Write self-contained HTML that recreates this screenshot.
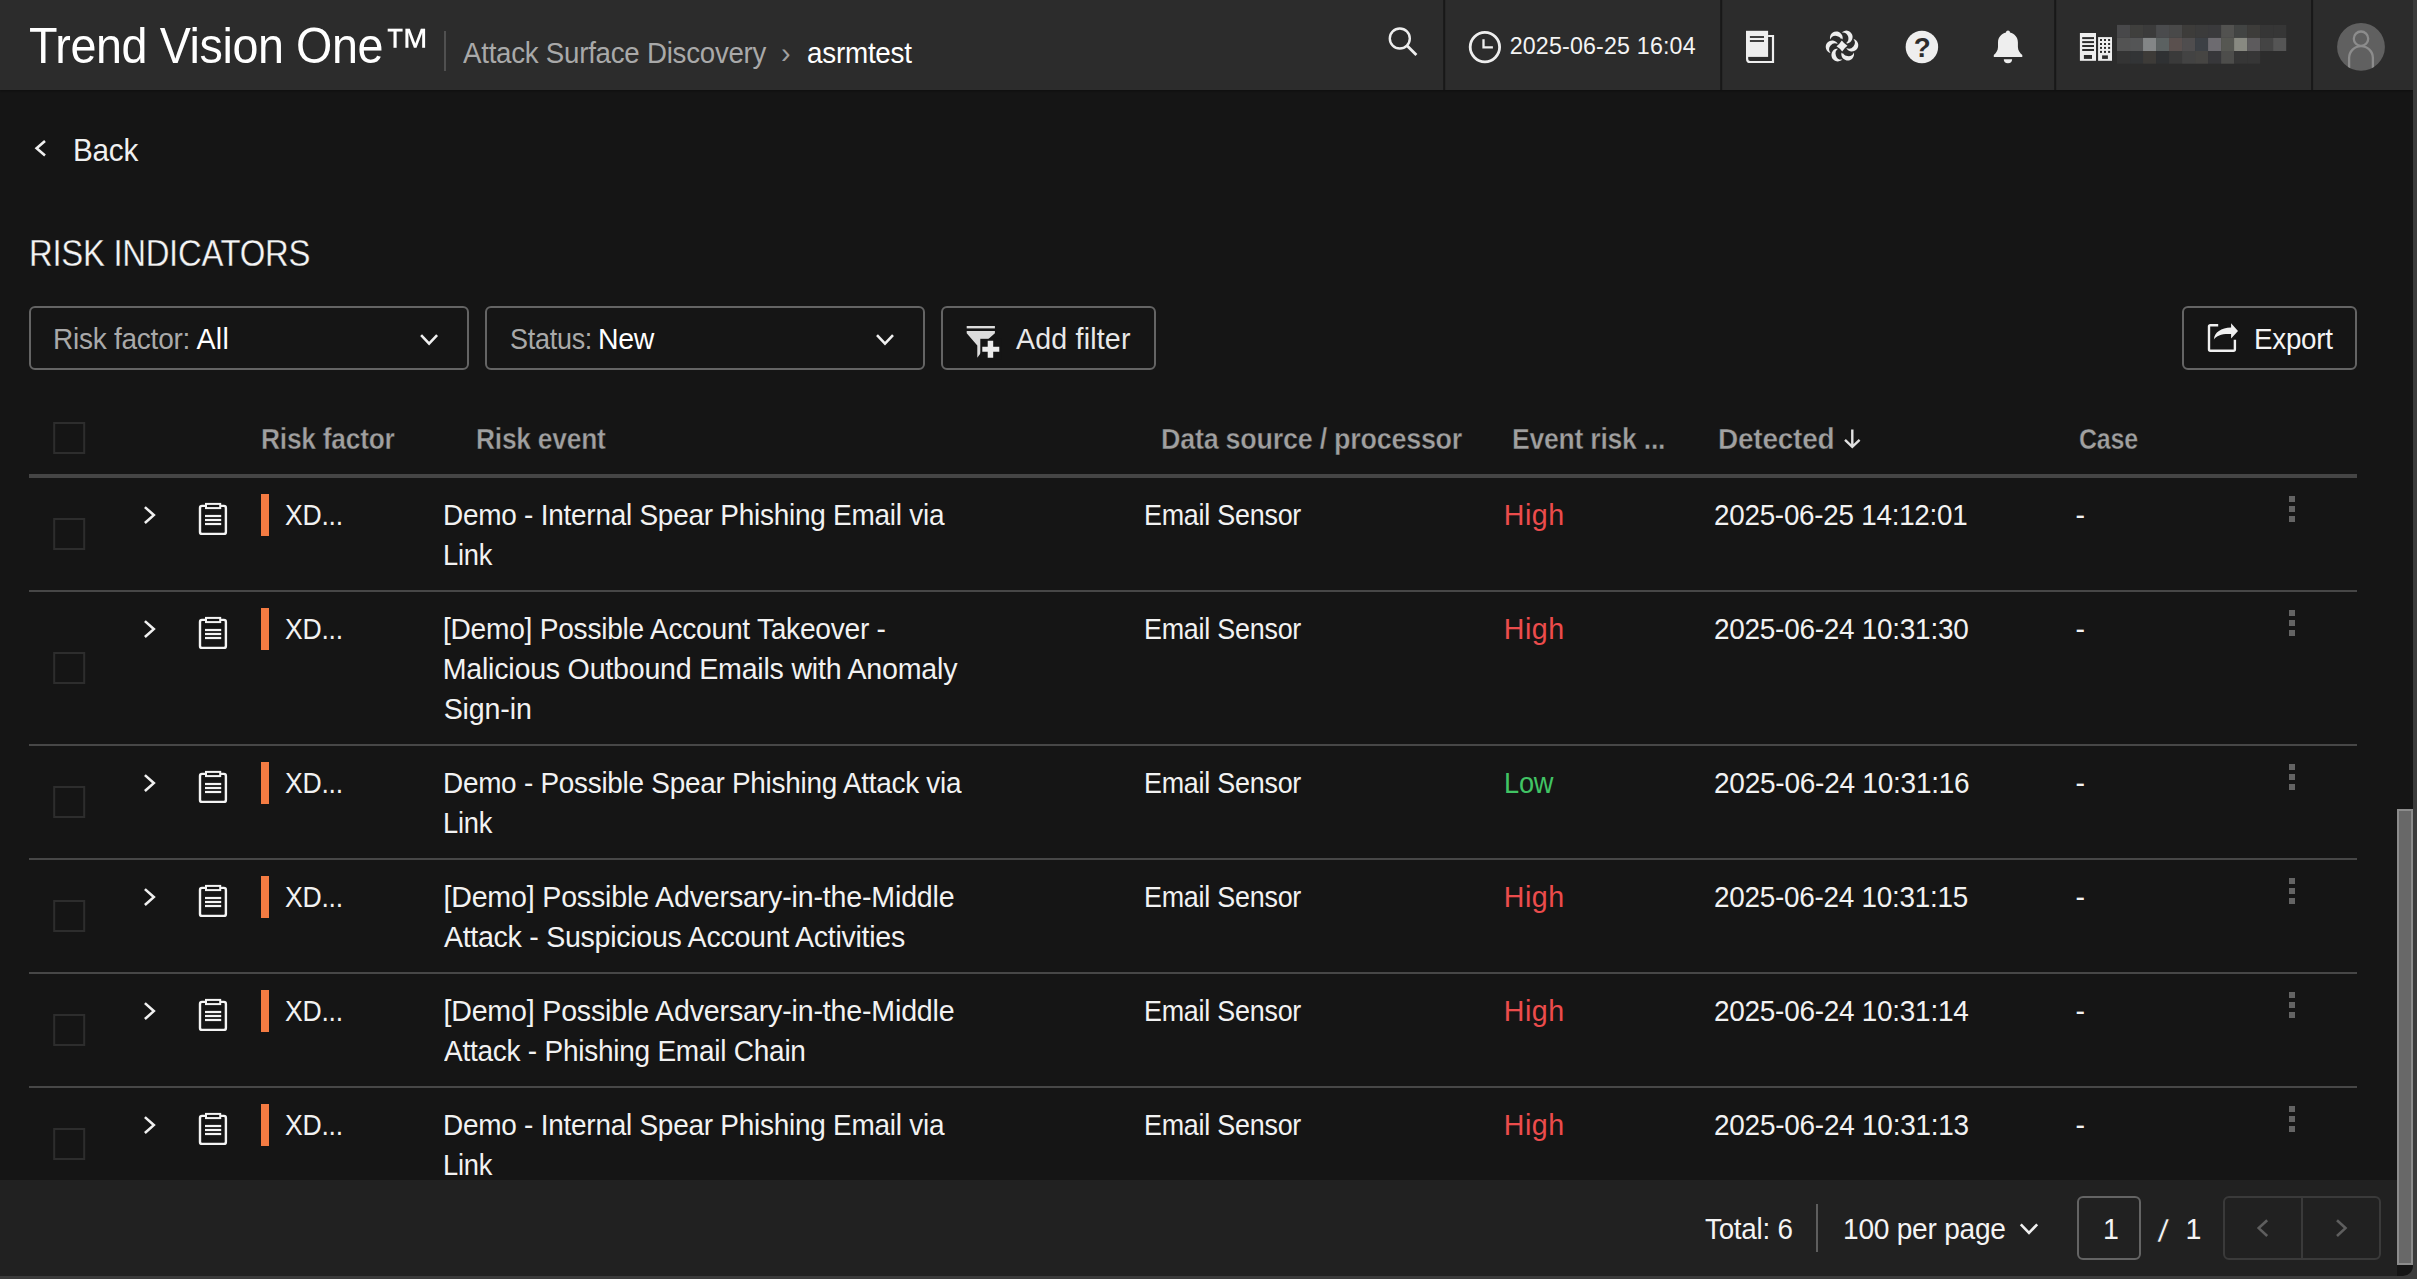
<!DOCTYPE html>
<html lang="en"><head><meta charset="utf-8"><title>Trend Vision One - Attack Surface Discovery</title>
<style>
html,body{margin:0;padding:0;background:#151515;overflow:hidden}
body{width:2417px;height:1279px;position:relative;font-family:'Liberation Sans',sans-serif}
.abs{position:absolute}
.t{position:absolute;white-space:pre;line-height:40px;transform-origin:0 50%}
.box{position:absolute;box-sizing:border-box;border:2px solid #646464;border-radius:6px}
#hdr{position:absolute;left:0;top:0;width:2413px;height:90px;background:#2c2c2c;box-shadow:0 1px 2px rgba(0,0,0,.35)}
#main{position:absolute;left:0;top:0;width:2413px;height:1180px;overflow:hidden}
#ftr{position:absolute;left:0;top:1180px;width:2397px;height:96px;background:#212121}
#sb{position:absolute;left:2397px;top:809px;width:16px;height:456px;box-sizing:border-box;background:#686868;border:2px solid #8c8c8c}
#edge-r{position:absolute;left:2413px;top:0;width:4px;height:1279px;background:#3b3b3b}
#edge-b{position:absolute;left:0;top:1276px;width:2417px;height:3px;background:#3b3b3b}
#corner{position:absolute;left:2397px;top:1265px;width:16px;height:11px;background:#151515;border-bottom-right-radius:10px}
</style></head><body>
<div id="main">
<svg class="abs" style="left:0;top:0" width="2413" height="1180" viewBox="0 0 2413 1180">
<path d="M45,141L36.6,148.2L45,155.4" fill="none" stroke="#f0f0f0" stroke-width="2.6"/>
<path d="M421.1,335.2L429.1,343.59999999999997L437.1,335.2" fill="none" stroke="#f0f0f0" stroke-width="2.6"/>
<path d="M877,335.2L885,343.59999999999997L893,335.2" fill="none" stroke="#f0f0f0" stroke-width="2.6"/>
<rect x="966.7" y="326" width="28.2" height="2.4" fill="#dcdcdc"/>
<path d="M966.7,331H994.9V333.2L981,345.5V352.8L977.3,357.8V345.5L966.7,333.2Z" fill="#dcdcdc"/>
<rect x="980.3" y="338.8" width="21" height="21" fill="#151515"/>
<path d="M987.7,340.7H993.2V346.7H999.3V351.7H993.2V357.8H987.7V351.7H982.3V346.7H987.7Z" fill="#ececec"/>
<path d="M2218.2,325.2H2210.4Q2209,325.2 2209,326.6V349.3Q2209,350.7 2210.4,350.7H2233.5Q2234.9,350.7 2234.9,349.3V339.8" fill="none" stroke="#f0f0f0" stroke-width="2.4"/>
<path d="M2231.1,323.3L2238,330.9L2231.1,338.4V334C2222,333.5 2216.5,335.5 2213.9,339.4C2214.5,332.5 2221,327.8 2231.1,327.6Z" fill="#f0f0f0"/>
<path d="M1852.3,429.5V446.5M1845,439.8L1852.3,446.8L1859.6,439.8" fill="none" stroke="#e0e0e0" stroke-width="2.4"/>
<rect x="54.2" y="423" width="30" height="30" fill="none" stroke="#2d2d2d" stroke-width="2"/>
<rect x="29" y="474" width="2328" height="4" fill="#454545"/>
<rect x="29" y="590" width="2328" height="2" fill="#474747"/>
<rect x="29" y="744" width="2328" height="2" fill="#474747"/>
<rect x="29" y="858" width="2328" height="2" fill="#474747"/>
<rect x="29" y="972" width="2328" height="2" fill="#474747"/>
<rect x="29" y="1086" width="2328" height="2" fill="#474747"/>
<rect x="54.2" y="519.0" width="30" height="30" fill="none" stroke="#2d2d2d" stroke-width="2"/>
<path d="M144.9,507.15000000000003L153.8,515.1L144.9,523.0500000000001" fill="none" stroke="#f0f0f0" stroke-width="2.6"/>
<rect x="200" y="505.9" width="25.9" height="28" rx="2" fill="none" stroke="#f4f4f4" stroke-width="2.4"/>
<rect x="206" y="503.9" width="14.2" height="4.2" fill="#151515" stroke="#f4f4f4" stroke-width="2"/>
<rect x="205" y="514.9" width="16.2" height="2.2" fill="#f4f4f4"/>
<rect x="205" y="518.9" width="16.2" height="2.2" fill="#f4f4f4"/>
<rect x="205" y="522.9" width="16.2" height="2.2" fill="#f4f4f4"/>
<rect x="261" y="494" width="8" height="42" fill="#f47b42"/>
<rect x="2289" y="496" width="6" height="6" fill="#646464"/>
<rect x="2289" y="506" width="6" height="6" fill="#646464"/>
<rect x="2289" y="516" width="6" height="6" fill="#646464"/>
<rect x="54.2" y="653.0" width="30" height="30" fill="none" stroke="#2d2d2d" stroke-width="2"/>
<path d="M144.9,621.15L153.8,629.1L144.9,637.0500000000001" fill="none" stroke="#f0f0f0" stroke-width="2.6"/>
<rect x="200" y="619.9" width="25.9" height="28" rx="2" fill="none" stroke="#f4f4f4" stroke-width="2.4"/>
<rect x="206" y="617.9" width="14.2" height="4.2" fill="#151515" stroke="#f4f4f4" stroke-width="2"/>
<rect x="205" y="628.9" width="16.2" height="2.2" fill="#f4f4f4"/>
<rect x="205" y="632.9" width="16.2" height="2.2" fill="#f4f4f4"/>
<rect x="205" y="636.9" width="16.2" height="2.2" fill="#f4f4f4"/>
<rect x="261" y="608" width="8" height="42" fill="#f47b42"/>
<rect x="2289" y="610" width="6" height="6" fill="#646464"/>
<rect x="2289" y="620" width="6" height="6" fill="#646464"/>
<rect x="2289" y="630" width="6" height="6" fill="#646464"/>
<rect x="54.2" y="787.0" width="30" height="30" fill="none" stroke="#2d2d2d" stroke-width="2"/>
<path d="M144.9,775.15L153.8,783.1L144.9,791.0500000000001" fill="none" stroke="#f0f0f0" stroke-width="2.6"/>
<rect x="200" y="773.9" width="25.9" height="28" rx="2" fill="none" stroke="#f4f4f4" stroke-width="2.4"/>
<rect x="206" y="771.9" width="14.2" height="4.2" fill="#151515" stroke="#f4f4f4" stroke-width="2"/>
<rect x="205" y="782.9" width="16.2" height="2.2" fill="#f4f4f4"/>
<rect x="205" y="786.9" width="16.2" height="2.2" fill="#f4f4f4"/>
<rect x="205" y="790.9" width="16.2" height="2.2" fill="#f4f4f4"/>
<rect x="261" y="762" width="8" height="42" fill="#f47b42"/>
<rect x="2289" y="764" width="6" height="6" fill="#646464"/>
<rect x="2289" y="774" width="6" height="6" fill="#646464"/>
<rect x="2289" y="784" width="6" height="6" fill="#646464"/>
<rect x="54.2" y="901.0" width="30" height="30" fill="none" stroke="#2d2d2d" stroke-width="2"/>
<path d="M144.9,889.15L153.8,897.1L144.9,905.0500000000001" fill="none" stroke="#f0f0f0" stroke-width="2.6"/>
<rect x="200" y="887.9" width="25.9" height="28" rx="2" fill="none" stroke="#f4f4f4" stroke-width="2.4"/>
<rect x="206" y="885.9" width="14.2" height="4.2" fill="#151515" stroke="#f4f4f4" stroke-width="2"/>
<rect x="205" y="896.9" width="16.2" height="2.2" fill="#f4f4f4"/>
<rect x="205" y="900.9" width="16.2" height="2.2" fill="#f4f4f4"/>
<rect x="205" y="904.9" width="16.2" height="2.2" fill="#f4f4f4"/>
<rect x="261" y="876" width="8" height="42" fill="#f47b42"/>
<rect x="2289" y="878" width="6" height="6" fill="#646464"/>
<rect x="2289" y="888" width="6" height="6" fill="#646464"/>
<rect x="2289" y="898" width="6" height="6" fill="#646464"/>
<rect x="54.2" y="1015.0" width="30" height="30" fill="none" stroke="#2d2d2d" stroke-width="2"/>
<path d="M144.9,1003.15L153.8,1011.1L144.9,1019.0500000000001" fill="none" stroke="#f0f0f0" stroke-width="2.6"/>
<rect x="200" y="1001.9" width="25.9" height="28" rx="2" fill="none" stroke="#f4f4f4" stroke-width="2.4"/>
<rect x="206" y="999.9" width="14.2" height="4.2" fill="#151515" stroke="#f4f4f4" stroke-width="2"/>
<rect x="205" y="1010.9" width="16.2" height="2.2" fill="#f4f4f4"/>
<rect x="205" y="1014.9" width="16.2" height="2.2" fill="#f4f4f4"/>
<rect x="205" y="1018.9" width="16.2" height="2.2" fill="#f4f4f4"/>
<rect x="261" y="990" width="8" height="42" fill="#f47b42"/>
<rect x="2289" y="992" width="6" height="6" fill="#646464"/>
<rect x="2289" y="1002" width="6" height="6" fill="#646464"/>
<rect x="2289" y="1012" width="6" height="6" fill="#646464"/>
<rect x="54.2" y="1129.0" width="30" height="30" fill="none" stroke="#2d2d2d" stroke-width="2"/>
<path d="M144.9,1117.1499999999999L153.8,1125.1L144.9,1133.05" fill="none" stroke="#f0f0f0" stroke-width="2.6"/>
<rect x="200" y="1115.9" width="25.9" height="28" rx="2" fill="none" stroke="#f4f4f4" stroke-width="2.4"/>
<rect x="206" y="1113.9" width="14.2" height="4.2" fill="#151515" stroke="#f4f4f4" stroke-width="2"/>
<rect x="205" y="1124.9" width="16.2" height="2.2" fill="#f4f4f4"/>
<rect x="205" y="1128.9" width="16.2" height="2.2" fill="#f4f4f4"/>
<rect x="205" y="1132.9" width="16.2" height="2.2" fill="#f4f4f4"/>
<rect x="261" y="1104" width="8" height="42" fill="#f47b42"/>
<rect x="2289" y="1106" width="6" height="6" fill="#646464"/>
<rect x="2289" y="1116" width="6" height="6" fill="#646464"/>
<rect x="2289" y="1126" width="6" height="6" fill="#646464"/>
</svg>
</div>
<div id="hdr"></div>
<svg class="abs" style="left:0;top:0" width="2413" height="90" viewBox="0 0 2413 90">
<rect x="444" y="31" width="2" height="40" fill="#505050"/>
<rect x="1443.2" y="0" width="2" height="90" fill="#181818"/>
<rect x="1720.2" y="0" width="2" height="90" fill="#181818"/>
<rect x="2054.2" y="0" width="2" height="90" fill="#181818"/>
<rect x="2311.1" y="0" width="2" height="90" fill="#181818"/>
<g fill="none" stroke="#eeeeee">
<circle cx="1399.8" cy="38.5" r="10" stroke-width="2.4"/>
<path d="M1407.1,45.8L1416.4,55.1" stroke-width="2.8"/>
<circle cx="1484.9" cy="47.1" r="14.7" stroke-width="2.8"/>
<path d="M1483.5,39.3V47.3H1492.9" stroke-width="2.3"/>
</g>
<rect x="1746" y="30.8" width="22.1" height="26.1" fill="#eeeeee"/>
<rect x="1749.9" y="36.1" width="14.1" height="1.8" fill="#2c2c2c"/>
<rect x="1749.9" y="40.1" width="14.1" height="1.8" fill="#2c2c2c"/>
<path d="M1768.1,36H1773V62H1750.2Q1747.1,62 1747.1,58.9V55" fill="none" stroke="#eeeeee" stroke-width="2.2"/>
<path d="M1853.48,38.95A6.40,6.40 0 1,1 1846.05,47.81A5.90,5.90 0 0,0 1853.48,38.95Z" fill="#eeeeee"/>
<path d="M1841.63,32.53A6.40,6.40 0 1,1 1845.59,43.40A5.90,5.90 0 0,0 1841.63,32.53Z" fill="#eeeeee"/>
<path d="M1830.15,39.58A6.40,6.40 0 1,1 1841.54,41.59A5.90,5.90 0 0,0 1830.15,39.58Z" fill="#eeeeee"/>
<path d="M1830.52,53.05A6.40,6.40 0 1,1 1837.95,44.19A5.90,5.90 0 0,0 1830.52,53.05Z" fill="#eeeeee"/>
<path d="M1842.37,59.47A6.40,6.40 0 1,1 1838.41,48.60A5.90,5.90 0 0,0 1842.37,59.47Z" fill="#eeeeee"/>
<path d="M1853.85,52.42A6.40,6.40 0 1,1 1842.46,50.41A5.90,5.90 0 0,0 1853.85,52.42Z" fill="#eeeeee"/>
<path d="M1847.50,45.81Q1844.28,48.12 1842.19,51.50Q1839.88,48.28 1836.50,46.19Q1839.72,43.88 1841.81,40.50Q1844.12,43.72 1847.50,45.81Z" fill="#eeeeee" stroke="#2c2c2c" stroke-width="2.6" paint-order="stroke"/>
<circle cx="1921.9" cy="46.9" r="16.25" fill="#eeeeee"/>
<text x="1922.2" y="57" text-anchor="middle" font-family="'Liberation Sans',sans-serif" font-weight="700" font-size="27.8" fill="#2c2c2c">?</text>
<path d="M2008,30.6c1.1,0 2,0.9 2,2C2014.5,33.6 2017.9,37.4 2017.9,42.5V47C2017.9,50.5 2020,53 2022.3,55V57.1H1993.8V55C1996,53 1998,50.5 1998,47V42.5C1998,37.4 2001.5,33.6 2006,32.6c0,-1.1 0.9,-2 2,-2Z" fill="#eeeeee"/>
<path d="M2003.8,59.3H2012.1A4.15,3.9 0 0 1 2003.8,59.3Z" fill="#eeeeee"/>
<rect x="2079.9" y="33" width="16.1" height="27.8" fill="#eeeeee"/>
<rect x="2082.2" y="37.1" width="11.8" height="2" fill="#2c2c2c"/>
<rect x="2082.2" y="41.1" width="11.8" height="2" fill="#2c2c2c"/>
<rect x="2082.2" y="45.0" width="11.8" height="2" fill="#2c2c2c"/>
<rect x="2082.2" y="49.0" width="11.8" height="2" fill="#2c2c2c"/>
<rect x="2083.9" y="55" width="8.1" height="3.9" fill="#2c2c2c"/>
<rect x="2098.1" y="37.1" width="13.9" height="23.7" fill="#eeeeee"/>
<rect x="2100.0" y="39.0" width="2" height="2" fill="#2c2c2c"/>
<rect x="2104.0" y="39.0" width="2" height="2" fill="#2c2c2c"/>
<rect x="2108.1" y="39.0" width="2" height="2" fill="#2c2c2c"/>
<rect x="2100.0" y="43.0" width="2" height="2" fill="#2c2c2c"/>
<rect x="2104.0" y="43.0" width="2" height="2" fill="#2c2c2c"/>
<rect x="2108.1" y="43.0" width="2" height="2" fill="#2c2c2c"/>
<rect x="2100.0" y="46.9" width="2" height="2" fill="#2c2c2c"/>
<rect x="2104.0" y="46.9" width="2" height="2" fill="#2c2c2c"/>
<rect x="2108.1" y="46.9" width="2" height="2" fill="#2c2c2c"/>
<rect x="2100.0" y="50.9" width="2" height="2" fill="#2c2c2c"/>
<rect x="2104.0" y="50.9" width="2" height="2" fill="#2c2c2c"/>
<rect x="2108.1" y="50.9" width="2" height="2" fill="#2c2c2c"/>
<rect x="2102.1" y="55.4" width="5.8" height="3.5" fill="#2c2c2c"/>
<rect x="2117.00" y="24.9" width="13.1" height="13.00" fill="#48484a"/>
<rect x="2130.01" y="24.9" width="13.1" height="13.00" fill="#3f3f3d"/>
<rect x="2143.02" y="24.9" width="13.1" height="13.00" fill="#3b3b3b"/>
<rect x="2156.03" y="24.9" width="13.1" height="13.00" fill="#4a4b4d"/>
<rect x="2169.04" y="24.9" width="13.1" height="13.00" fill="#494949"/>
<rect x="2182.05" y="24.9" width="13.1" height="13.00" fill="#3d3c3a"/>
<rect x="2195.06" y="24.9" width="13.1" height="13.00" fill="#3b3b3b"/>
<rect x="2208.07" y="24.9" width="13.1" height="13.00" fill="#3a3a3c"/>
<rect x="2221.08" y="24.9" width="13.1" height="13.00" fill="#525250"/>
<rect x="2234.09" y="24.9" width="13.1" height="13.00" fill="#424443"/>
<rect x="2247.10" y="24.9" width="13.1" height="13.00" fill="#3d3c3a"/>
<rect x="2260.11" y="24.9" width="13.1" height="13.00" fill="#363636"/>
<rect x="2273.12" y="24.9" width="13.1" height="13.00" fill="#363636"/>
<rect x="2117.00" y="37.9" width="13.1" height="13.10" fill="#535353"/>
<rect x="2130.01" y="37.9" width="13.1" height="13.10" fill="#545556"/>
<rect x="2143.02" y="37.9" width="13.1" height="13.10" fill="#838687"/>
<rect x="2156.03" y="37.9" width="13.1" height="13.10" fill="#5b6161"/>
<rect x="2169.04" y="37.9" width="13.1" height="13.10" fill="#5a504e"/>
<rect x="2182.05" y="37.9" width="13.1" height="13.10" fill="#4f4d4e"/>
<rect x="2195.06" y="37.9" width="13.1" height="13.10" fill="#3c4045"/>
<rect x="2208.07" y="37.9" width="13.1" height="13.10" fill="#6d6b70"/>
<rect x="2221.08" y="37.9" width="13.1" height="13.10" fill="#565752"/>
<rect x="2234.09" y="37.9" width="13.1" height="13.10" fill="#888981"/>
<rect x="2247.10" y="37.9" width="13.1" height="13.10" fill="#5d5b5d"/>
<rect x="2260.11" y="37.9" width="13.1" height="13.10" fill="#444444"/>
<rect x="2273.12" y="37.9" width="13.1" height="13.10" fill="#555555"/>
<rect x="2117.00" y="51" width="13.1" height="12.70" fill="#343434"/>
<rect x="2130.01" y="51" width="13.1" height="12.70" fill="#323436"/>
<rect x="2143.02" y="51" width="13.1" height="12.70" fill="#3d3b38"/>
<rect x="2156.03" y="51" width="13.1" height="12.70" fill="#2f3133"/>
<rect x="2169.04" y="51" width="13.1" height="12.70" fill="#3a3a3a"/>
<rect x="2182.05" y="51" width="13.1" height="12.70" fill="#434343"/>
<rect x="2195.06" y="51" width="13.1" height="12.70" fill="#464543"/>
<rect x="2208.07" y="51" width="13.1" height="12.70" fill="#37373a"/>
<rect x="2221.08" y="51" width="13.1" height="12.70" fill="#4d4d4b"/>
<rect x="2234.09" y="51" width="13.1" height="12.70" fill="#363636"/>
<rect x="2247.10" y="51" width="13.1" height="12.70" fill="#363636"/>
<circle cx="2361" cy="46.9" r="23.9" fill="#606060"/>
<clipPath id="av"><circle cx="2361" cy="46.9" r="23.9"/></clipPath>
<g clip-path="url(#av)" fill="none" stroke="#8c8c8c" stroke-width="2.3">
<circle cx="2361" cy="38.7" r="7.2"/>
<path d="M2349.1,75V58A11.9,11.9 0 0 1 2372.9,58V75"/>
</g>
</svg>
<div class="box" style="left:29px;top:306px;width:440px;height:64px"></div>
<div class="box" style="left:485px;top:306px;width:440px;height:64px"></div>
<div class="box" style="left:941px;top:306px;width:215px;height:64px"></div>
<div class="box" style="left:2182px;top:306px;width:175px;height:64px"></div>
<div id="ftr"></div>
<svg class="abs" style="left:0;top:1180px" width="2397" height="96" viewBox="0 1180 2397 96">
<rect x="1816" y="1204" width="2" height="48" fill="#5e5e5e"/>
<path d="M2020.8,1224.3L2029,1232.8999999999999L2037.2,1224.3" fill="none" stroke="#f0f0f0" stroke-width="2.6"/>
<path d="M2267.2,1220.2L2258.7,1228.1L2267.2,1236" fill="none" stroke="#5e5e5e" stroke-width="2.6"/>
<path d="M2337,1220.2L2345.5,1228.1L2337,1236" fill="none" stroke="#5e5e5e" stroke-width="2.6"/>
</svg>
<div class="box" style="left:2077px;top:1196px;width:64px;height:64px"></div>
<div class="box" style="left:2223px;top:1196px;width:158px;height:64px;border-color:#3a3a3a"></div>
<div class="abs" style="left:2300.7px;top:1196px;width:2px;height:64px;background:#3a3a3a"></div>
<div id="sb"></div><div class="abs" style="left:2403px;top:1266px;width:10px;height:10px;background:#3b3b3b"></div><div id="corner"></div>
<div id="edge-r"></div><div id="edge-b"></div>
<div id="txt">
<div class="t" style="left:29.27px;top:26px;font-size:50px;color:#ffffff;letter-spacing:-0.446px;transform:scaleX(0.9339)">Trend Vision One™</div>
<div class="t" style="left:462.60px;top:33px;font-size:28.6px;color:#a9a9a9;letter-spacing:-0.255px;transform:scaleX(0.9677)">Attack Surface Discovery</div>
<div class="t" style="left:781.10px;top:33px;font-size:28.6px;color:#a0a0a0;letter-spacing:0.000px">›</div>
<div class="t" style="left:806.63px;top:33px;font-size:28.6px;color:#ffffff;letter-spacing:-0.255px;transform:scaleX(0.9738)">asrmtest</div>
<div class="t" style="left:1509.70px;top:26px;font-size:23.2px;color:#f4f4f4;letter-spacing:0.187px">2025-06-25 16:04</div>
<div class="t" style="left:73.24px;top:130px;font-size:32px;color:#f0f0f0;letter-spacing:-0.286px;transform:scaleX(0.9289)">Back</div>
<div class="t" style="left:28.73px;top:234px;font-size:37px;color:#f4f4f4;letter-spacing:-0.330px;transform:scaleX(0.8884);-webkit-text-stroke:0.35px #151515">RISK INDICATORS</div>
<div class="t" style="left:52.74px;top:319px;font-size:28.6px;color:#a9a9a9;letter-spacing:-0.255px;transform:scaleX(0.9795)">Risk factor:</div>
<div class="t" style="left:196.60px;top:319px;font-size:28.6px;color:#ffffff;letter-spacing:0.200px">All</div>
<div class="t" style="left:509.66px;top:319px;font-size:28.6px;color:#a9a9a9;letter-spacing:-0.255px;transform:scaleX(0.9412)">Status:</div>
<div class="t" style="left:597.61px;top:319px;font-size:28.6px;color:#ffffff;letter-spacing:-0.255px;transform:scaleX(0.9947)">New</div>
<div class="t" style="left:1016.00px;top:319px;font-size:28.6px;color:#e8e8e8;letter-spacing:0.178px">Add filter</div>
<div class="t" style="left:2254.06px;top:319px;font-size:28.6px;color:#f4f4f4;letter-spacing:-0.255px;transform:scaleX(0.9709)">Export</div>
<div class="t" style="left:261.06px;top:419px;font-size:28.6px;color:#a0a0a0;letter-spacing:-0.255px;transform:scaleX(0.9216);font-weight:700;-webkit-text-stroke:0.4px #151515">Risk factor</div>
<div class="t" style="left:475.86px;top:419px;font-size:28.6px;color:#a0a0a0;letter-spacing:-0.255px;transform:scaleX(0.9221);font-weight:700;-webkit-text-stroke:0.4px #151515">Risk event</div>
<div class="t" style="left:1160.82px;top:419px;font-size:28.6px;color:#a0a0a0;letter-spacing:-0.255px;transform:scaleX(0.9410);font-weight:700;-webkit-text-stroke:0.4px #151515">Data source / processor</div>
<div class="t" style="left:1511.64px;top:419px;font-size:28.6px;color:#a0a0a0;letter-spacing:-0.255px;transform:scaleX(0.9290);font-weight:700;-webkit-text-stroke:0.4px #151515">Event risk ...</div>
<div class="t" style="left:1717.74px;top:419px;font-size:28.6px;color:#a0a0a0;letter-spacing:-0.255px;transform:scaleX(0.9799);font-weight:700;-webkit-text-stroke:0.4px #151515">Detected</div>
<div class="t" style="left:2078.53px;top:419px;font-size:28.6px;color:#a0a0a0;letter-spacing:-0.255px;transform:scaleX(0.8742);font-weight:700;-webkit-text-stroke:0.4px #151515">Case</div>
<div class="t" style="left:285.17px;top:495px;font-size:28.6px;color:#f2f2f2;letter-spacing:-0.255px;transform:scaleX(0.9292)">XD...</div>
<div class="t" style="left:442.74px;top:495px;font-size:28.6px;color:#f2f2f2;letter-spacing:-0.255px;transform:scaleX(0.9778)">Demo - Internal Spear Phishing Email via</div>
<div class="t" style="left:442.79px;top:535px;font-size:28.6px;color:#f2f2f2;letter-spacing:-0.255px;transform:scaleX(0.9535)">Link</div>
<div class="t" style="left:1143.92px;top:495px;font-size:28.6px;color:#f2f2f2;letter-spacing:-0.255px;transform:scaleX(0.9407)">Email Sensor</div>
<div class="t" style="left:1503.80px;top:495px;font-size:28.6px;color:#ec4c4c;letter-spacing:0.533px">High</div>
<div class="t" style="left:1714.43px;top:495px;font-size:28.6px;color:#f2f2f2;letter-spacing:-0.255px;transform:scaleX(0.9725)">2025-06-25 14:12:01</div>
<div class="t" style="left:2075.55px;top:495px;font-size:28.6px;color:#f2f2f2;letter-spacing:0.000px">-</div>
<div class="t" style="left:285.17px;top:609px;font-size:28.6px;color:#f2f2f2;letter-spacing:-0.255px;transform:scaleX(0.9292)">XD...</div>
<div class="t" style="left:443.43px;top:609px;font-size:28.6px;color:#f2f2f2;letter-spacing:-0.255px;transform:scaleX(0.9835)">[Demo] Possible Account Takeover -</div>
<div class="t" style="left:442.70px;top:649px;font-size:28.6px;color:#f2f2f2;letter-spacing:-0.219px">Malicious Outbound Emails with Anomaly</div>
<div class="t" style="left:443.70px;top:689px;font-size:28.6px;color:#f2f2f2;letter-spacing:-0.150px">Sign-in</div>
<div class="t" style="left:1143.92px;top:609px;font-size:28.6px;color:#f2f2f2;letter-spacing:-0.255px;transform:scaleX(0.9407)">Email Sensor</div>
<div class="t" style="left:1503.80px;top:609px;font-size:28.6px;color:#ec4c4c;letter-spacing:0.533px">High</div>
<div class="t" style="left:1714.42px;top:609px;font-size:28.6px;color:#f2f2f2;letter-spacing:-0.255px;transform:scaleX(0.9761)">2025-06-24 10:31:30</div>
<div class="t" style="left:2075.55px;top:609px;font-size:28.6px;color:#f2f2f2;letter-spacing:0.000px">-</div>
<div class="t" style="left:285.17px;top:763px;font-size:28.6px;color:#f2f2f2;letter-spacing:-0.255px;transform:scaleX(0.9292)">XD...</div>
<div class="t" style="left:442.75px;top:763px;font-size:28.6px;color:#f2f2f2;letter-spacing:-0.255px;transform:scaleX(0.9751)">Demo - Possible Spear Phishing Attack via</div>
<div class="t" style="left:442.79px;top:803px;font-size:28.6px;color:#f2f2f2;letter-spacing:-0.255px;transform:scaleX(0.9535)">Link</div>
<div class="t" style="left:1143.92px;top:763px;font-size:28.6px;color:#f2f2f2;letter-spacing:-0.255px;transform:scaleX(0.9407)">Email Sensor</div>
<div class="t" style="left:1503.70px;top:763px;font-size:28.6px;color:#41c464;letter-spacing:-0.255px;transform:scaleX(0.9507)">Low</div>
<div class="t" style="left:1714.42px;top:763px;font-size:28.6px;color:#f2f2f2;letter-spacing:-0.255px;transform:scaleX(0.9799)">2025-06-24 10:31:16</div>
<div class="t" style="left:2075.55px;top:763px;font-size:28.6px;color:#f2f2f2;letter-spacing:0.000px">-</div>
<div class="t" style="left:285.17px;top:877px;font-size:28.6px;color:#f2f2f2;letter-spacing:-0.255px;transform:scaleX(0.9292)">XD...</div>
<div class="t" style="left:443.40px;top:877px;font-size:28.6px;color:#f2f2f2;letter-spacing:-0.179px">[Demo] Possible Adversary-in-the-Middle</div>
<div class="t" style="left:443.90px;top:917px;font-size:28.6px;color:#f2f2f2;letter-spacing:-0.289px">Attack - Suspicious Account Activities</div>
<div class="t" style="left:1143.92px;top:877px;font-size:28.6px;color:#f2f2f2;letter-spacing:-0.255px;transform:scaleX(0.9407)">Email Sensor</div>
<div class="t" style="left:1503.80px;top:877px;font-size:28.6px;color:#ec4c4c;letter-spacing:0.533px">High</div>
<div class="t" style="left:1714.43px;top:877px;font-size:28.6px;color:#f2f2f2;letter-spacing:-0.255px;transform:scaleX(0.9742)">2025-06-24 10:31:15</div>
<div class="t" style="left:2075.55px;top:877px;font-size:28.6px;color:#f2f2f2;letter-spacing:0.000px">-</div>
<div class="t" style="left:285.17px;top:991px;font-size:28.6px;color:#f2f2f2;letter-spacing:-0.255px;transform:scaleX(0.9292)">XD...</div>
<div class="t" style="left:443.40px;top:991px;font-size:28.6px;color:#f2f2f2;letter-spacing:-0.179px">[Demo] Possible Adversary-in-the-Middle</div>
<div class="t" style="left:443.90px;top:1031px;font-size:28.6px;color:#f2f2f2;letter-spacing:-0.255px;transform:scaleX(0.9795)">Attack - Phishing Email Chain</div>
<div class="t" style="left:1143.92px;top:991px;font-size:28.6px;color:#f2f2f2;letter-spacing:-0.255px;transform:scaleX(0.9407)">Email Sensor</div>
<div class="t" style="left:1503.80px;top:991px;font-size:28.6px;color:#ec4c4c;letter-spacing:0.533px">High</div>
<div class="t" style="left:1714.42px;top:991px;font-size:28.6px;color:#f2f2f2;letter-spacing:-0.255px;transform:scaleX(0.9761)">2025-06-24 10:31:14</div>
<div class="t" style="left:2075.55px;top:991px;font-size:28.6px;color:#f2f2f2;letter-spacing:0.000px">-</div>
<div class="t" style="left:285.17px;top:1105px;font-size:28.6px;color:#f2f2f2;letter-spacing:-0.255px;transform:scaleX(0.9292)">XD...</div>
<div class="t" style="left:442.74px;top:1105px;font-size:28.6px;color:#f2f2f2;letter-spacing:-0.255px;transform:scaleX(0.9778)">Demo - Internal Spear Phishing Email via</div>
<div class="t" style="left:442.79px;top:1145px;font-size:28.6px;color:#f2f2f2;letter-spacing:-0.255px;transform:scaleX(0.9535)">Link</div>
<div class="t" style="left:1143.92px;top:1105px;font-size:28.6px;color:#f2f2f2;letter-spacing:-0.255px;transform:scaleX(0.9407)">Email Sensor</div>
<div class="t" style="left:1503.80px;top:1105px;font-size:28.6px;color:#ec4c4c;letter-spacing:0.533px">High</div>
<div class="t" style="left:1714.42px;top:1105px;font-size:28.6px;color:#f2f2f2;letter-spacing:-0.255px;transform:scaleX(0.9779)">2025-06-24 10:31:13</div>
<div class="t" style="left:2075.55px;top:1105px;font-size:28.6px;color:#f2f2f2;letter-spacing:0.000px">-</div>
<div class="t" style="left:1705.10px;top:1209px;font-size:28.6px;color:#f4f4f4;letter-spacing:-0.255px;transform:scaleX(0.9718)">Total: 6</div>
<div class="t" style="left:1842.53px;top:1209px;font-size:28.6px;color:#f4f4f4;letter-spacing:-0.255px;transform:scaleX(0.9835)">100 per page</div>
<div class="t" style="left:2102.90px;top:1209px;font-size:28.6px;color:#f4f4f4;letter-spacing:0.000px">1</div>
<div class="t" style="left:2156.80px;top:1211px;font-size:32px;color:#f4f4f4;letter-spacing:0.000px;transform:scaleX(1.3889);-webkit-text-stroke:0.7px #212121">/</div>
<div class="t" style="left:2185.40px;top:1209px;font-size:28.6px;color:#f4f4f4;letter-spacing:0.000px">1</div>
</div>
</body></html>
